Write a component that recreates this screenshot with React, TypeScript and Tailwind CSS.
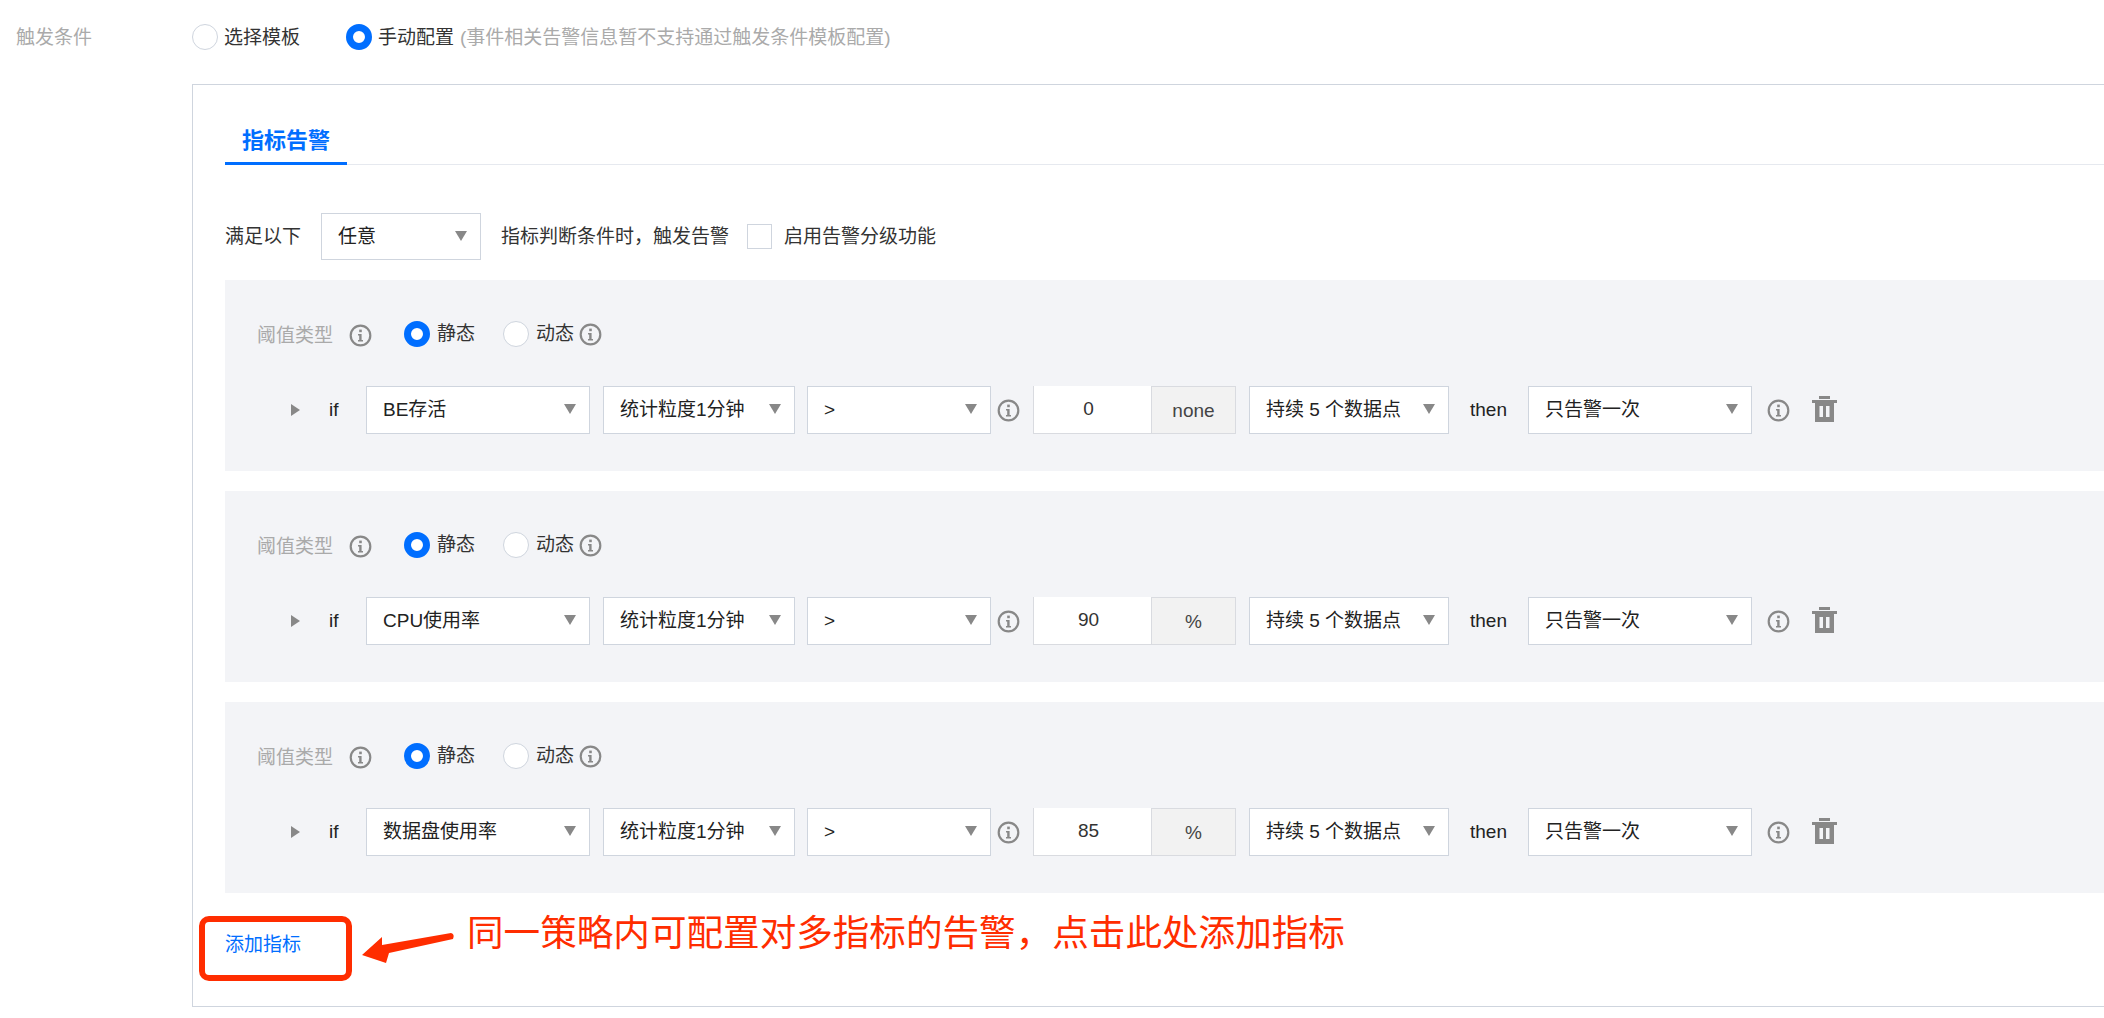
const FONT = "font-['Liberation_Sans','Noto_Sans_CJK_SC',sans-serif]";

function Radio({ checked }: { checked?: boolean }) {
  if (checked) {
    return <span className="block w-[26px] h-[26px] rounded-full border-[7px] border-[#006eff] bg-white shrink-0" />;
  }
  return <span className="block w-[26px] h-[26px] rounded-full border border-[#cfd5de] bg-white shrink-0" />;
}

function InfoIcon() {
  return (
    <svg width="23" height="23" viewBox="0 0 23 23" className="shrink-0">
      <circle cx="11.5" cy="11.5" r="9.8" fill="none" stroke="#888888" strokeWidth="2.2" />
      <rect x="10.2" y="5.6" width="2.6" height="2.6" fill="#888888" />
      <path d="M9 10h3.6v6H14v1.6H9V16h1.2v-4.4H9z" fill="#888888" />
    </svg>
  );
}

function TrashIcon() {
  return (
    <svg width="27" height="26" viewBox="0 0 27 26" className="shrink-0">
      <rect x="8" y="0" width="11" height="3" fill="#888888" />
      <rect x="1" y="4" width="25" height="3" fill="#888888" />
      <path d="M4 7h19v19H4z" fill="#888888" />
      <rect x="8.5" y="10" width="3.5" height="11" fill="#f3f4f7" />
      <rect x="15" y="10" width="3.5" height="11" fill="#f3f4f7" />
    </svg>
  );
}

function Select({ label, className }: { label: string; className: string }) {
  return (
    <div className={`flex items-center justify-between bg-white border border-[#cfd5de] pl-[16px] pr-[13px] text-[#222222] text-[19px] shrink-0 ${className}`}>
      <span className="whitespace-nowrap">{label}</span>
      <span className="block w-0 h-0 border-x-[6.5px] border-x-transparent border-t-[10px] border-t-[#888888] -mt-[2px]" />
    </div>
  );
}

function MetricPanel({ metric, value, unit }: { metric: string; value: string; unit: string }) {
  return (
    <div className="h-[191px] bg-[#f3f4f7] pt-[41px]">
      <div className="flex items-center h-[26px] pl-[32px]">
        <span className="text-[19px] text-[#aaaaaa] w-[76px] mt-[4px]">阈值类型</span>
        <span className="ml-[16px] mt-[3px]"><InfoIcon /></span>
        <span className="ml-[32px]"><Radio checked /></span>
        <span className="ml-[7px] text-[19px] text-[#333333] pt-[1px]">静态</span>
        <span className="ml-[28px]"><Radio /></span>
        <span className="ml-[7px] text-[19px] text-[#333333] pt-[1px]">动态</span>
        <span className="ml-[5px]"><InfoIcon /></span>
      </div>
      <div className="flex items-center h-[48px] mt-[39px] pl-[66px] text-[19px] text-[#222222]">
        <span className="block w-0 h-0 border-y-[6.5px] border-y-transparent border-l-[9px] border-l-[#888888]" />
        <span className="ml-[29px] w-[10px]">if</span>
        <Select label={metric} className="ml-[27px] w-[224px] h-[48px]" />
        <Select label="统计粒度1分钟" className="ml-[13px] w-[192px] h-[48px]" />
        <Select label=">" className="ml-[12px] w-[184px] h-[48px]" />
        <span className="ml-[6px]"><InfoIcon /></span>
        <div className="flex ml-[13px] h-[48px] border border-[#d9dbe0] shrink-0">
          <div className="w-[117px] bg-white flex items-center justify-center pr-[8px] text-[#333333] -mt-[1px]">{value}</div>
          <div className="w-[84px] bg-[#f2f2f2] border-l border-[#d9dbe0] flex items-center justify-center text-[#444444] pt-[3px]">{unit}</div>
        </div>
        <Select label="持续 5 个数据点" className="ml-[13px] w-[200px] h-[48px]" />
        <span className="ml-[21px] w-[37px]">then</span>
        <Select label="只告警一次" className="ml-[21px] w-[224px] h-[48px]" />
        <span className="ml-[15px]"><InfoIcon /></span>
        <span className="ml-[21px] -mt-[2px]"><TrashIcon /></span>
      </div>
    </div>
  );
}

export default function App() {
  const metrics = [
    { metric: "BE存活", value: "0", unit: "none" },
    { metric: "CPU使用率", value: "90", unit: "%" },
    { metric: "数据盘使用率", value: "85", unit: "%" },
  ];

  return (
    <div className={`relative w-[2104px] h-[1018px] overflow-hidden bg-white ${FONT}`}>
      <div className="flex items-center h-[26px] mt-[24px] text-[19px]">
        <span className="w-[192px] pl-[16px] text-[#aaaaaa] pt-[3px]">触发条件</span>
        <Radio />
        <span className="ml-[6px] text-[#333333] pt-[2px]">选择模板</span>
        <span className="ml-[46px]"><Radio checked /></span>
        <span className="ml-[6px] text-[#333333] pt-[2px]">手动配置</span>
        <span className="ml-[6px] text-[#aaaaaa] pt-[2px]">(事件相关告警信息暂不支持通过触发条件模板配置)</span>
      </div>

      <div className="ml-[192px] mt-[34px] w-[2000px] h-[923px] border-t border-l border-b border-[#cfd5de] pl-[32px]">
        <div className="mt-[36px] flex h-[44px] border-b border-[#e6e9ef] w-[1880px]">
          <div className="w-[122px] h-[44px] border-b-[3px] border-[#006eff] text-center text-[22px] font-bold text-[#006eff] leading-[40px]">
            指标告警
          </div>
        </div>

        <div className="flex items-center mt-[48px] h-[47px] text-[19px] text-[#333333]">
          <span className="w-[76px] pt-[2px]">满足以下</span>
          <Select label="任意" className="ml-[20px] w-[160px] h-[47px] pt-[1px]" />
          <span className="ml-[20px] whitespace-nowrap pt-[2px]">指标判断条件时，触发告警</span>
          <span className="block ml-[18px] w-[25px] h-[25px] border border-[#cfd5de] bg-white" />
          <span className="ml-[12px] whitespace-nowrap pt-[2px]">启用告警分级功能</span>
        </div>

        <div className="flex flex-col gap-[20px] mt-[20px]">
          {metrics.map((m) => (
            <MetricPanel key={m.metric} metric={m.metric} value={m.value} unit={m.unit} />
          ))}
        </div>

        <div className="mt-[40px] text-[19px] text-[#006eff] leading-[24px] w-[77px] whitespace-nowrap">添加指标</div>
      </div>

      {/* red annotation drawn on top of the screenshot */}
      <div className="absolute left-[199px] top-[916px] w-[153px] h-[65px] border-[6px] border-[#ff2d00] rounded-[10px]" />
      <svg className="absolute left-[355px] top-[925px]" width="105" height="45" viewBox="0 0 105 45">
        <path d="M7 30 L27 12 L27 20 L96 8 Q100 9 98 14 L34 28 L31 38 Z" fill="#ff2d00" />
      </svg>
      <div className="absolute left-[467px] top-[912px] text-[36.6px] leading-[44px] text-[#ff2d00] whitespace-nowrap">
        同一策略内可配置对多指标的告警，点击此处添加指标
      </div>
    </div>
  );
}
